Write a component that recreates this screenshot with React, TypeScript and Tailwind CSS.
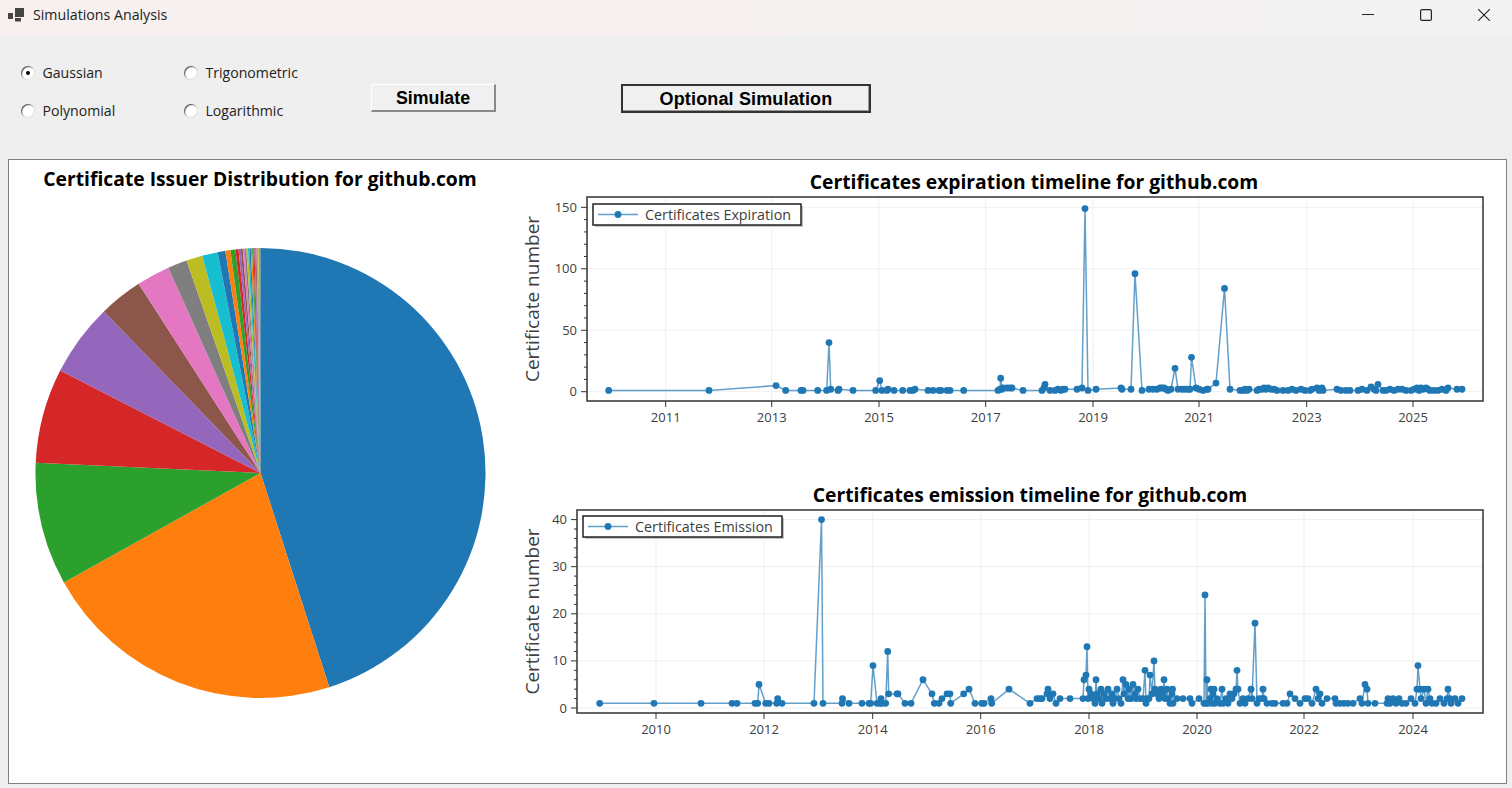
import React from "react";

const BLUE = "#1f77b4";
const TAB10 = ["#1f77b4", "#ff7f0e", "#2ca02c", "#d62728", "#9467bd", "#8c564b", "#e377c2", "#7f7f7f", "#bcbd22", "#17becf"];

type P = [number, number];

const EXP: P[] = [
  [608.7,1],[709,1],[776,5],[785.7,1],[801,1],[803,1],[817.7,1],[826.7,1],[829,40],[830.7,2],[838,1],[839,2],[853,1],[875.7,1],[879.7,9],[882,1],[887,1],[888,2],[894,1],[902.7,1],[910,1],[913,1],[915,2],[928,1],[933,1],[939,1],[941,1],[947,1],[950,1],[963.7,1],
  [998,1],[1000,2],[1000.7,11],[1002,2],[1003,3],[1007,3],[1010,3],[1012,3],[1023,1],[1042,1],[1044,3],[1045,6],[1050,1],[1055,1],[1058,2],[1061,1],[1063,2],[1065,2],[1077,2],[1082,3],[1085,149],[1088,1],[1096,2],[1121,3],[1122,2],[1131,2],[1135,96],[1142,1],
  [1149,2],[1153,2],[1157,2],[1160,3],[1162,3],[1164,3],[1166,2],[1168,1],[1171,2],[1175,19],[1178,2],[1182,2],[1185,2],[1188,2],[1190,2],[1191.5,28],[1196,3],[1199,2],[1203,1],[1207,2],[1208,2],[1216,7],[1224.5,84],[1230,2],
  [1240,1],[1243,1],[1245,2],[1247,1],[1249,2],[1257,1],[1259,2],[1262,2],[1264,3],[1266,2],[1268,3],[1271,2],[1274,2],[1277,1],[1283,1],[1288,1],[1292,2],[1296,1],[1301,2],[1305,1],[1310,1],[1312,2],[1317,3],[1319,1],[1320,2],[1322,3],[1323,1],
  [1337,2],[1341,1],[1346,1],[1350,1],[1358,1],[1362,2],[1367,1],[1371,4],[1374,2],[1376,1],[1378,6],[1383,1],[1386,1],[1390,2],[1394,1],[1398,2],[1402,2],[1406,1],[1411,1],[1414,2],[1417,3],[1419,1],[1421,3],[1423,2],[1426,3],[1428,2],[1430,1],[1434,1],[1438,1],[1442,2],[1446,1],[1448,3],[1457,2],[1462,2],
];

const EMI: P[] = [
  [599.7,1],[654,1],[701,1],[732,1],[737,1],[755,1],[757.7,1],[759,5],[765.7,1],[769,1],[776.7,1],[777.7,2],[782,1],[814,1],[821.5,40],[823,1],[842,1],[842.5,2],[849,1],[862,1],[869,1],[870.7,1],[873,9],[877,1],[880,1],[881,2],[882,1],[885.7,1],[887.7,12],[888.7,3],[897,3],[898,3],[905,1],[911,1],[923,6],[932,3],[934.3,1],[939,1],[942,2],[947,3],[950,3],[950.7,1],[963.7,3],[969,4],[975,1],[981.7,1],[984,1],[991,2],[991.7,1],[1009,4],
  [1030,1],[1037,2],[1040,2],[1042,2],[1047,3],[1048,4],[1050,2],[1053,3],[1056,1],[1060,2],[1070,2],
  [1083,2],[1084,6],[1086,7],[1087,13],[1088,2],[1089,4],[1091,3],[1093,2],[1095,1],[1096,6],[1097,3],[1099,2],[1101,4],[1102,1],[1104,3],[1106,2],[1108,4],[1110,2],[1112,3],[1113,1],[1115,2],[1117,4],[1119,2],[1121,1],[1123,6],[1124,3],[1126,5],[1128,2],[1129,4],[1131,2],[1133,5],[1135,3],[1136,2],[1138,4],[1140,2],[1143,2],
  [1145,8],[1146,1],[1147,2],[1149,2],[1150,7],[1152,3],[1154,10],[1155,4],[1157,3],[1159,2],[1161,4],[1163,3],[1164,6],[1165,2],[1167,4],[1168,2],[1170,1],[1172,3],[1172.5,4],[1173,1],[1177,2],[1183,2],[1190,2],[1192,1],[1199,2],[1204,1],[1205,24],[1206,1],[1207,6],[1208,1],[1210,2],[1211,4],[1212,1],[1213,3],[1214,4],[1215,1],[1217,2],[1220,1],[1222,4],[1223,1],[1226,2],[1228,1],[1230,3],[1232,2],[1234,3],[1236,4],[1237,8],[1238,4],[1240,1],[1243,2],[1245,1],[1248,2],[1251,4],[1252,2],[1255,18],[1257,1],[1259,2],[1262,2],[1263,4],[1264,2],[1267,1],
  [1272,1],[1275,1],[1283,1],[1287,1],[1290,3],[1295,2],[1300,1],[1305,2],[1308,2],[1312,1],[1316,4],[1318,2],[1320,3],[1322,1],[1327,2],[1335,2],[1336,1],[1340,1],[1344,1],[1348,1],[1353,1],[1360,2],[1362,1],[1365,5],[1367,4],[1368,1],[1375,1],
  [1387,1],[1388,2],[1390,1],[1393,2],[1396,1],[1399,2],[1402,1],[1406,1],[1411,2],[1415,1],[1417,4],[1418,9],[1420,4],[1421,2],[1424,4],[1426,1],[1428,4],[1430,2],[1432,1],[1436,1],[1440,2],[1444,1],[1447,2],[1448,4],[1450,2],[1451,1],[1455,2],[1458,1],[1462,2],
];

type ChartProps = {
  viewY: number;
  height: number;
  left: number;
  top: number;
  bottom: number;
  y0: number;
  unit: number;
  yMajor: number[];
  yMinor: number[];
  xTicks: [number, string][];
  data: P[];
  legend: string;
  legendX: number;
  legendY: number;
  legendW: number;
};

function Chart({ viewY, height, left, top, bottom, y0, unit, yMajor, yMinor, xTicks, data, legend, legendX, legendY, legendW }: ChartProps) {
  const right = 1483;
  const yp = (v: number) => y0 - v * unit;
  const pts = data.map(([x, v]) => `${x},${yp(v).toFixed(1)}`).join(" ");
  return (
    <svg width={995} height={height} viewBox={`511 ${viewY} 995 ${height}`} className="block font-['Open_Sans',sans-serif]">
      {xTicks.map(([x]) => <line key={x} x1={x} x2={x} y1={top} y2={bottom} stroke="#efefef" strokeWidth={1} />)}
      {yMajor.map((v) => <line key={v} x1={left} x2={right} y1={yp(v)} y2={yp(v)} stroke="#efefef" strokeWidth={1} />)}
      <polyline points={pts} fill="none" stroke={BLUE} strokeOpacity={0.7} strokeWidth={1.5} />
      {data.map(([x, v], i) => <circle key={i} cx={x} cy={yp(v)} r={3.4} fill={BLUE} />)}
      <rect x={left} y={top} width={right - left} height={bottom - top} fill="none" stroke="#333" strokeWidth={1.5} />
      {yMinor.map((v) => <line key={v} x1={left - 3} x2={left} y1={yp(v)} y2={yp(v)} stroke="#333" strokeWidth={1} />)}
      {yMajor.map((v) => (
        <g key={v}>
          <line x1={left - 6} x2={left} y1={yp(v)} y2={yp(v)} stroke="#333" strokeWidth={1} />
          <text x={left - 10} y={yp(v) + 4.5} textAnchor="end" fontSize={13} fill="#404040">{v}</text>
        </g>
      ))}
      {xTicks.map(([x, l]) => (
        <g key={x}>
          <line x1={x} x2={x} y1={bottom} y2={bottom + 6} stroke="#333" strokeWidth={1} />
          <text x={x} y={bottom + 21} textAnchor="middle" fontSize={13} fill="#404040">{l}</text>
        </g>
      ))}
      <text transform={`translate(539 ${(top + bottom) / 2}) rotate(-90)`} textAnchor="middle" fontSize={19} fill="#404040">Certificate number</text>
      <rect x={legendX + 2} y={legendY + 2} width={legendW} height={21} fill="#c4c4c4" />
      <rect x={legendX} y={legendY} width={legendW} height={21} fill="#fff" stroke="#222" strokeWidth={1.5} />
      <line x1={legendX + 5} x2={legendX + 45} y1={legendY + 10.5} y2={legendY + 10.5} stroke={BLUE} strokeOpacity={0.7} strokeWidth={1.5} />
      <circle cx={legendX + 25} cy={legendY + 10.5} r={3.4} fill={BLUE} />
      <text x={legendX + 52} y={legendY + 15.5} fontSize={14.3} fill="#404040">{legend}</text>
    </svg>
  );
}

function Pie() {
  const cx = 260.5, cy = 473, r = 225;
  const stops = [162.2, 240.9, 272.6, 297.1, 315.9, 327.2, 335.8, 340.8, 345, 349, 351, 352.3, 353.6, 354.4];
  let a = 354.4, w = 0.55;
  while (a < 359.8) {
    a += w;
    stops.push(Math.min(a, 360));
    w = Math.max(0.16, w * 0.93);
  }
  stops.push(360);
  const pt = (d: number) => {
    const t = (d * Math.PI) / 180;
    return `${(cx + r * Math.sin(t)).toFixed(2)} ${(cy - r * Math.cos(t)).toFixed(2)}`;
  };
  let prev = 0;
  return (
    <svg width={502} height={520} viewBox="9 222 502 520" className="block">
      {stops.map((s, i) => {
        const d = `M${cx} ${cy}L${pt(prev)}A${r} ${r} 0 ${s - prev > 180 ? 1 : 0} 1 ${pt(s)}Z`;
        prev = s;
        return <path key={i} d={d} fill={TAB10[i % 10]} />;
      })}
    </svg>
  );
}

function Radio({ label, checked }: { label: string; checked?: boolean }) {
  return (
    <label className="flex items-center gap-[7.5px] h-[20px] text-[14.1px] text-[#222]">
      <span className="flex items-center justify-center w-[14px] h-[14px] rounded-full bg-white shadow-[inset_1px_1px_1px_#555,inset_-1px_-1px_1px_#e4e4e4]">
        {checked && <span className="w-[4px] h-[4px] rounded-full bg-black" />}
      </span>
      {label}
    </label>
  );
}

export default function App() {
  return (
    <div className="w-[1512px] h-[788px] overflow-hidden flex flex-col bg-[#efefef] font-['Open_Sans',sans-serif]">
      <header className="h-[35px] flex items-center bg-gradient-to-r from-[#f7f0ee] via-[#f6f1f0] to-[#f3f3f3]">
        <svg width="17" height="14" viewBox="0 0 17 14" className="ml-[8px] mb-[5px]" fill="#444">
          <rect x="0" y="5" width="5" height="6" />
          <rect x="7" y="0" width="9" height="9" />
          <rect x="7" y="10" width="6" height="3.5" />
        </svg>
        <span className="ml-[8px] mb-[5px] text-[14.2px] text-[#222]">Simulations Analysis</span>
        <div className="ml-auto flex items-center gap-[46px] mr-[22px] mb-[6px]">
          <svg width="12" height="12" viewBox="0 0 12 12" stroke="#222" fill="none"><path d="M0 5.5H12" /></svg>
          <svg width="12" height="12" viewBox="0 0 12 12" stroke="#222" strokeWidth="1.2" fill="none"><rect x=".6" y=".6" width="10.8" height="10.8" rx="1.5" /></svg>
          <svg width="12" height="12" viewBox="0 0 12 12" stroke="#222" strokeWidth="1.1" fill="none"><path d="M0 0L12 12M12 0L0 12" /></svg>
        </div>
      </header>

      <div className="h-[124px] flex items-start">
        <div className="grid grid-cols-[163px_163px] gap-y-[18px] ml-[21px] mt-[28px]">
          <Radio label="Gaussian" checked />
          <Radio label="Trigonometric" />
          <Radio label="Polynomial" />
          <Radio label="Logarithmic" />
        </div>
        <button className="ml-[24px] mt-[49px] w-[125px] h-[28px] bg-[#f0f0f0] text-[17.8px] font-bold text-black font-['Liberation_Sans',sans-serif] border-t border-l border-[#fff] border-r-2 border-b-2 border-r-[#8a8a8a] border-b-[#8a8a8a]">
          Simulate
        </button>
        <button className="ml-[125px] mt-[49px] w-[250px] h-[29px] pb-[3px] bg-[#f0f0f0] text-[18px] tracking-[0.15px] font-bold text-black font-['Liberation_Sans',sans-serif] border-2 border-[#333] shadow-[inset_-1px_-1px_0_#999]">
          Optional Simulation
        </button>
      </div>

      <main className="ml-[8px] w-[1499px] h-[625px] bg-white border border-[#808080] flex">
        <section className="w-[502px] shrink-0">
          <h2 className="pt-[7px] h-[32px] text-center text-[19.3px] leading-[24px] font-bold text-black">Certificate Issuer Distribution for github.com</h2>
          <div className="mt-[30px]"><Pie /></div>
        </section>
        <section className="flex-1 flex flex-col">
          <h2 className="mt-[10px] ml-[51px] h-[24px] text-center text-[19.3px] leading-[24px] font-bold text-black">Certificates expiration timeline for github.com</h2>
          <Chart
            viewY={194} height={289} left={587} top={197} bottom={401} y0={391.7} unit={1.229}
            yMajor={[0, 50, 100, 150]}
            yMinor={[10, 20, 30, 40, 60, 70, 80, 90, 110, 120, 130, 140]}
            xTicks={[[665.7, "2011"], [771.7, "2013"], [879, "2015"], [985.7, "2017"], [1093, "2019"], [1199, "2021"], [1306.7, "2023"], [1413, "2025"]]}
            data={EXP} legend="Certificates Expiration" legendX={593} legendY={204} legendW={208}
          />
          <h2 className="ml-[43px] h-[24px] text-center text-[19.3px] leading-[24px] font-bold text-black">Certificates emission timeline for github.com</h2>
          <Chart
            viewY={507} height={240} left={577} top={510} bottom={713} y0={708} unit={4.71}
            yMajor={[0, 10, 20, 30, 40]}
            yMinor={[2, 4, 6, 8, 12, 14, 16, 18, 22, 24, 26, 28, 32, 34, 36, 38]}
            xTicks={[[656, "2010"], [764, "2012"], [872.7, "2014"], [980.7, "2016"], [1089, "2018"], [1197, "2020"], [1304, "2022"], [1413, "2024"]]}
            data={EMI} legend="Certificates Emission" legendX={583} legendY={516} legendW={199}
          />
        </section>
      </main>
    </div>
  );
}
